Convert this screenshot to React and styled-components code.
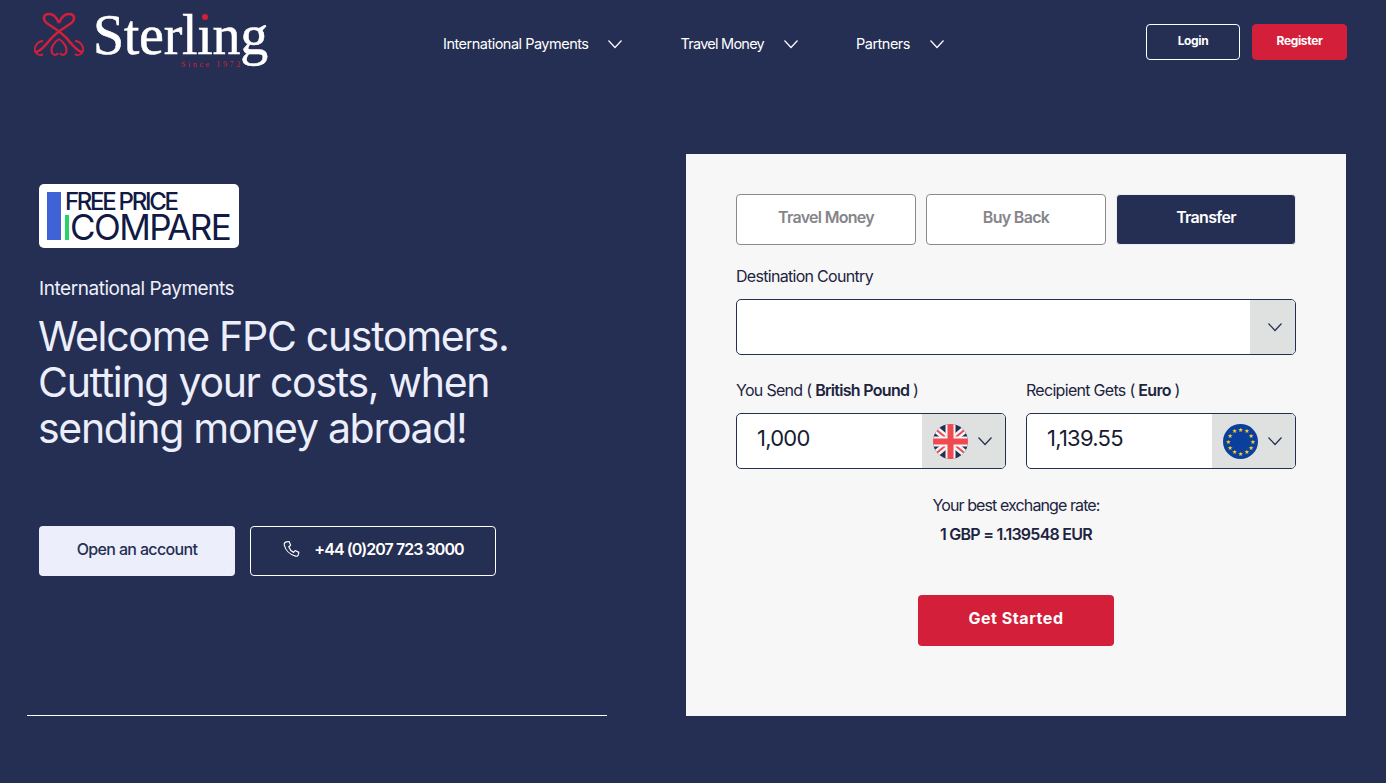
import React from 'react'
import styled, { createGlobalStyle } from 'styled-components'

const GlobalStyle = createGlobalStyle`
  html, body { margin: 0; padding: 0; background: #252e53; }
  * { box-sizing: border-box; }
  body { font-family: Inter, "Liberation Sans", sans-serif; }
`

const navy = '#252e53'
const red = '#d31f3a'

const Chevron = ({ size = 16, color = 'currentColor' }) => (
  <svg width={size} height={size} viewBox="0 0 16 16" fill="none" stroke={color} strokeWidth="1.2">
    <path d="M1.5 4.5 L8 11.5 L14.5 4.5" />
  </svg>
)

const Emblem = () => (
  <svg width="60" height="55" viewBox="0 0 60 55" fill="none" stroke={red} strokeWidth="2.6">
    <path d="M29 15 C27 10 24 6 19 6 C13 6 12 12 18 16 C24 20 33 25 39 33 C43 38 47 43 52 44" />
    <path d="M29 15 C31 10 34 6 39 6 C45 6 46 12 40 16 C34 20 25 25 19 33 C15 38 11 43 6 44" />
    <path d="M13 33 C8 33 4 38 5 43 C6 47 11 48 13 46" strokeWidth="1.8" />
    <path d="M45 33 C50 33 54 38 53 43 C52 47 47 48 45 46" strokeWidth="1.8" />
    <path d="M29 31 C24 34 20 40 22 45 C24 48 27 47 28 45" strokeWidth="2" />
    <path d="M29 31 C34 34 38 40 36 45 C34 48 31 47 30 45" strokeWidth="2" />
  </svg>
)

const UkFlag = () => (
  <svg width="35" height="35" viewBox="0 0 35 35">
    <defs>
      <clipPath id="ukClip"><circle cx="17.5" cy="17.5" r="17.5" /></clipPath>
    </defs>
    <g clipPath="url(#ukClip)">
      <rect width="35" height="35" fill="#252e53" />
      <path d="M0 3 L35 32 M35 3 L0 32" stroke="#f4f4f4" strokeWidth="7" />
      <path d="M0 3 L35 32 M35 3 L0 32" stroke="#ee4a50" strokeWidth="2" />
      <path d="M17.5 0 V35 M0 17.5 H35" stroke="#f4f4f4" strokeWidth="10" />
      <path d="M17.5 0 V35 M0 17.5 H35" stroke="#ee4a50" strokeWidth="6" />
    </g>
  </svg>
)

const EuFlag = () => {
  const stars = Array.from({ length: 12 }, (_, i) => {
    const a = (i * Math.PI) / 6
    return [17.5 + 12.2 * Math.sin(a), 17.5 - 12.2 * Math.cos(a)]
  })
  return (
    <svg width="35" height="35" viewBox="0 0 35 35">
      <circle cx="17.5" cy="17.5" r="17.5" fill="#0a3f9e" />
      {stars.map(([x, y], i) => (
        <text key={i} x={x} y={y + 2.2} fontSize="6" textAnchor="middle" fill="#f5d415" fontFamily="DejaVu Sans">★</text>
      ))}
    </svg>
  )
}

export default function App() {
  return (
    <Page>
      <GlobalStyle />
      <Header>
        <Logo>
          <Emblem />
          <LogoWords>
            <LogoName>Sterl<LogoI>ı<LogoDot /></LogoI>ng</LogoName>
            <LogoSince>Since 1972</LogoSince>
          </LogoWords>
        </Logo>
        <Nav>
          <NavItem>International Payments <Chevron /></NavItem>
          <NavItem $tight>Travel Money <Chevron /></NavItem>
          <NavItem>Partners <Chevron /></NavItem>
        </Nav>
        <HeaderActions>
          <LoginButton>Login</LoginButton>
          <RegisterButton>Register</RegisterButton>
        </HeaderActions>
      </Header>
      <Main>
        <Hero>
          <Badge>
            <BadgeBlue />
            <BadgeText>
              <BadgeTop>FREE PRICE</BadgeTop>
              <BadgeBottom><BadgeGreen />COMPARE</BadgeBottom>
            </BadgeText>
          </Badge>
          <Eyebrow>International Payments</Eyebrow>
          <Title>Welcome FPC customers.<br />Cutting your costs, when<br />sending money abroad!</Title>
          <HeroActions>
            <OpenButton>Open an account</OpenButton>
            <PhoneButton>
              <svg width="18" height="18" viewBox="0 0 24 24" fill="none" stroke="#fff" strokeWidth="1.5" strokeLinejoin="round">
                <path d="M6 2.5 L9.5 2 L11.5 7 L9 9 C10 12 12.5 15 15.5 16.5 L17.5 14 L22.5 16.5 L21.5 20 C21 21.5 19.5 22 18 21.5 C10.5 19.5 4.5 13.5 3 6.5 C2.7 4.5 4 3 6 2.5 Z" />
              </svg>
              +44 (0)207 723 3000
            </PhoneButton>
          </HeroActions>
        </Hero>
        <Panel>
          <Tabs>
            <Tab>Travel Money</Tab>
            <Tab>Buy Back</Tab>
            <Tab $active>Transfer</Tab>
          </Tabs>
          <FieldLabel>Destination Country</FieldLabel>
          <SelectBox>
            <SelectValue />
            <SelectArrow $width={45}><Chevron color="#252e53" /></SelectArrow>
          </SelectBox>
          <AmountRow>
            <div>
              <FieldLabel>You Send ( <b>British Pound</b> )</FieldLabel>
              <SelectBox>
                <SelectValue>1,000</SelectValue>
                <SelectArrow $width={83}><UkFlag /><Chevron color="#252e53" /></SelectArrow>
              </SelectBox>
            </div>
            <div>
              <FieldLabel>Recipient Gets ( <b>Euro</b> )</FieldLabel>
              <SelectBox>
                <SelectValue>1,139.55</SelectValue>
                <SelectArrow $width={83}><EuFlag /><Chevron color="#252e53" /></SelectArrow>
              </SelectBox>
            </div>
          </AmountRow>
          <RateText>Your best exchange rate:</RateText>
          <RateValue>1 GBP = 1.139548 EUR</RateValue>
          <GetStarted>Get Started</GetStarted>
        </Panel>
      </Main>
    </Page>
  )
}

const Page = styled.div`
  width: 1386px;
  height: 783px;
  overflow: hidden;
  background: ${navy};
  color: #fff;
`

const Header = styled.header`
  display: flex;
  align-items: center;
  height: 84px;
  padding: 0 39px 0 30px;
`

const Logo = styled.div`
  display: flex;
  align-items: flex-start;
  gap: 3px;
  width: 413px;
  height: 84px;
  padding-top: 8px;
`

const LogoWords = styled.div`
  display: flex;
  flex-direction: column;
  margin-top: 3px;
`

const LogoName = styled.div`
  font-family: "Liberation Serif", serif;
  font-size: 56px;
  line-height: 48px;
  letter-spacing: -0.3px;
  color: #fff;
  -webkit-text-stroke: 0.5px #fff;
`

const LogoI = styled.span`
  position: relative;
`

const LogoDot = styled.span`
  position: absolute;
  left: 5px;
  top: 10px;
  width: 6px;
  height: 6px;
  border-radius: 50%;
  background: ${red};
`

const LogoSince = styled.div`
  font-family: "Liberation Serif", serif;
  font-size: 8px;
  line-height: 9px;
  letter-spacing: 2.6px;
  color: ${red};
  margin: 1px 0 0 88px;
`

const Nav = styled.nav`
  display: flex;
  align-items: center;
  gap: 57px;
  margin-top: 3px;
`

const NavItem = styled.a`
  display: flex;
  align-items: center;
  gap: 19px;
  font-size: 14.5px;
  letter-spacing: ${p => (p.$tight ? '-0.75px' : '-0.5px')};
  color: #fff;
`

const HeaderActions = styled.div`
  display: flex;
  gap: 12px;
  margin-left: auto;
  margin-top: 0;
`

const LoginButton = styled.button`
  width: 94px;
  height: 36px;
  padding-bottom: 4px;
  background: transparent;
  border: 1px solid #fff;
  border-radius: 4px;
  color: #fff;
  font: 700 12px Inter, sans-serif;
  letter-spacing: -0.35px;
`

const RegisterButton = styled(LoginButton)`
  width: 95px;
  background: ${red};
  border-color: ${red};
`

const Main = styled.main`
  display: flex;
  align-items: stretch;
  gap: 79px;
  height: 562px;
  margin-top: 70px;
  padding: 0 40px 0 27px;
`

const Hero = styled.section`
  width: 580px;
  padding: 30px 0 0 12px;
  border-bottom: 1px solid #fff;
`

const Badge = styled.div`
  display: flex;
  gap: 4px;
  width: 200px;
  height: 64px;
  padding: 8px;
  background: #fff;
  border-radius: 5px;
  color: #101a44;
`

const BadgeBlue = styled.div`
  width: 14px;
  height: 48px;
  background: #3f62d6;
`

const BadgeText = styled.div`
  display: flex;
  flex-direction: column;
  margin-top: -1px;
`

const BadgeTop = styled.div`
  font-size: 24px;
  line-height: 22px;
  font-weight: 500;
  letter-spacing: -2.3px;
`

const BadgeBottom = styled.div`
  display: flex;
  align-items: flex-end;
  gap: 1px;
  font-size: 35px;
  line-height: 29px;
  font-weight: 400;
  letter-spacing: -1.6px;
`

const BadgeGreen = styled.span`
  width: 4px;
  height: 25px;
  margin-bottom: 2px;
  background: #25d366;
`

const Eyebrow = styled.div`
  margin-top: 29px;
  font-size: 19px;
  line-height: 24px;
  letter-spacing: -0.45px;
  color: #eef0fa;
`

const Title = styled.h1`
  margin: 12px 0 0 -1px;
  font-size: 41px;
  line-height: 46px;
  font-weight: 400;
  letter-spacing: -1.3px;
  color: #eceefb;
`

const HeroActions = styled.div`
  display: flex;
  gap: 15px;
  margin-top: 75px;
`

const OpenButton = styled.button`
  width: 196px;
  height: 50px;
  padding-bottom: 5px;
  background: #eceefb;
  border: 0;
  border-radius: 4px;
  color: ${navy};
  font: 500 16px Inter, sans-serif;
  letter-spacing: -0.65px;
`

const PhoneButton = styled.button`
  display: flex;
  align-items: center;
  justify-content: center;
  gap: 14px;
  width: 246px;
  height: 50px;
  padding-bottom: 5px;
  background: transparent;
  border: 1px solid #fff;
  border-radius: 4px;
  color: #fff;
  font: 600 16px Inter, sans-serif;
  letter-spacing: -0.95px;
`

const Panel = styled.section`
  width: 660px;
  padding: 40px 50px;
  background: #f7f7f7;
  color: #1d2440;
`

const Tabs = styled.div`
  display: grid;
  grid-template-columns: repeat(3, 180px);
  gap: 10px;
`

const Tab = styled.button`
  height: 51px;
  padding-bottom: 6px;
  background: ${p => (p.$active ? navy : '#fff')};
  border: 1px solid ${p => (p.$active ? '#eceef2' : '#8a8a8a')};
  border-radius: 4px;
  color: ${p => (p.$active ? '#fff' : '#85858a')};
  font: 600 16px Inter, sans-serif;
  letter-spacing: -0.7px;
`

const FieldLabel = styled.div`
  margin-top: 20px;
  margin-bottom: 11px;
  font-size: 16px;
  line-height: 23px;
  letter-spacing: -0.7px;
  color: #1d2440;

  b { font-weight: 600; }
`

const SelectBox = styled.div`
  display: flex;
  height: 56px;
  background: #fff;
  border: 1px solid ${navy};
  border-radius: 5px;
  overflow: hidden;
`

const SelectValue = styled.div`
  flex: 1;
  padding-left: 20px;
  font-size: 22px;
  line-height: 49px;
  letter-spacing: -0.75px;
  color: #171c33;
`

const SelectArrow = styled.div`
  display: flex;
  align-items: center;
  justify-content: center;
  gap: 9px;
  width: ${p => p.$width}px;
  padding-left: ${p => (p.$width < 60 ? '4px' : '0')};
  padding-right: ${p => (p.$width < 60 ? '0' : '2px')};
  background: #dfe0e0;
`

const AmountRow = styled.div`
  display: grid;
  grid-template-columns: 270px 270px;
  gap: 20px;
  margin-top: 4px;
`

const RateText = styled.div`
  margin-top: 24px;
  text-align: center;
  font-size: 16px;
  line-height: 24px;
  letter-spacing: -0.9px;
`

const RateValue = styled.div`
  margin-top: 5px;
  text-align: center;
  font-size: 16px;
  line-height: 24px;
  font-weight: 600;
  letter-spacing: -0.75px;
`

const GetStarted = styled.button`
  display: block;
  width: 196px;
  height: 51px;
  margin: 49px auto 0;
  padding-bottom: 6px;
  background: ${red};
  border: 0;
  border-radius: 4px;
  color: #fff;
  font: 700 16px Inter, sans-serif;
  letter-spacing: 0.55px;
`
